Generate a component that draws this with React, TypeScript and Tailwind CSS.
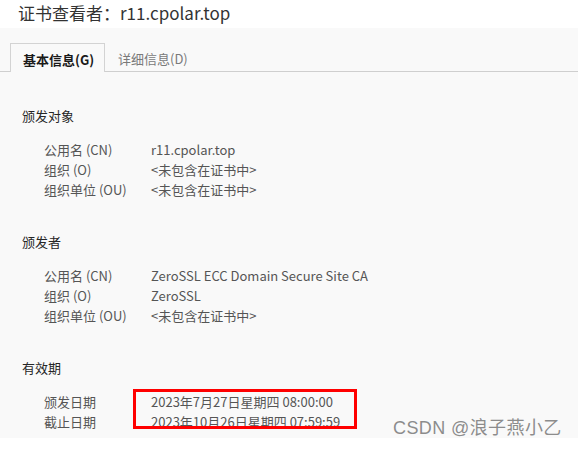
const font = { fontFamily: '"Noto Sans CJK SC", "Noto Sans", sans-serif' };

type Row = { label: string; value: string };

function Section({ title, rows, className = "", boxed = false }: { title: string; rows: Row[]; className?: string; boxed?: boolean }) {
  return (
    <div className={className}>
      <div className="pl-[22px] text-[13px] leading-[20px] text-[#262626]">{title}</div>
      <div className="relative mt-[14px] pl-[44px]">
        {rows.map((r) => (
          <div key={r.label} className="flex text-[13px] leading-[20px] text-[#555]">
            <div className="w-[107px] shrink-0">{r.label}</div>
            <div>{r.value}</div>
          </div>
        ))}
        {/* highlight box over the validity dates */}
        {boxed && (
          <div className="absolute left-[133px] top-[-3px] h-[40px] w-[224px] border-[3px] border-[#f00]" />
        )}
      </div>
    </div>
  );
}

export default function App() {
  return (
    <div className="relative flex h-[449px] w-[578px] flex-col overflow-hidden bg-white" style={font}>
      {/* title */}
      <div className="h-[28px] pl-[18px] pt-[2px] text-[17px] leading-[22px] text-[#333]">证书查看者：r11.cpolar.top</div>

      <div className="flex-1 bg-[#f9f9f9]">
        {/* tabs */}
        <div className="flex h-[44px] items-end border-b border-[#cfcfcf] pl-[10px]">
          <div className="-mb-px flex h-[29px] w-[95px] items-center border border-b-0 border-[#d3d3d3] bg-[#f9f9f9] pl-[12px] pt-[3px] text-[13px] font-bold text-[#1a1a1a]">
            基本信息(G)
          </div>
          <div className="flex h-[28px] items-center pl-[13px] pt-[3px] text-[13px] text-[#7a7a7a]">详细信息(D)</div>
        </div>

        <Section
          className="mt-[34px]"
          title="颁发对象"
          rows={[
            { label: "公用名 (CN)", value: "r11.cpolar.top" },
            { label: "组织 (O)", value: "<未包含在证书中>" },
            { label: "组织单位 (OU)", value: "<未包含在证书中>" },
          ]}
        />
        <Section
          className="mt-[32px]"
          title="颁发者"
          rows={[
            { label: "公用名 (CN)", value: "ZeroSSL ECC Domain Secure Site CA" },
            { label: "组织 (O)", value: "ZeroSSL" },
            { label: "组织单位 (OU)", value: "<未包含在证书中>" },
          ]}
        />
        <Section
          className="mt-[32px]"
          title="有效期"
          boxed
          rows={[
            { label: "颁发日期", value: "2023年7月27日星期四 08:00:00" },
            { label: "截止日期", value: "2023年10月26日星期四 07:59:59" },
          ]}
        />
      </div>
      <div className="h-[11px] bg-white" />

      {/* watermark */}
      <div
        className="absolute left-[393px] top-[416px] text-[18px] leading-[24px] tracking-[0.4px] text-[#8c8c8c]"
        style={{ fontFamily: '"Liberation Sans", "Noto Sans CJK SC", sans-serif', textShadow: "0 0 1px #fff" }}
      >
        CSDN @浪子燕小乙
      </div>
    </div>
  );
}
